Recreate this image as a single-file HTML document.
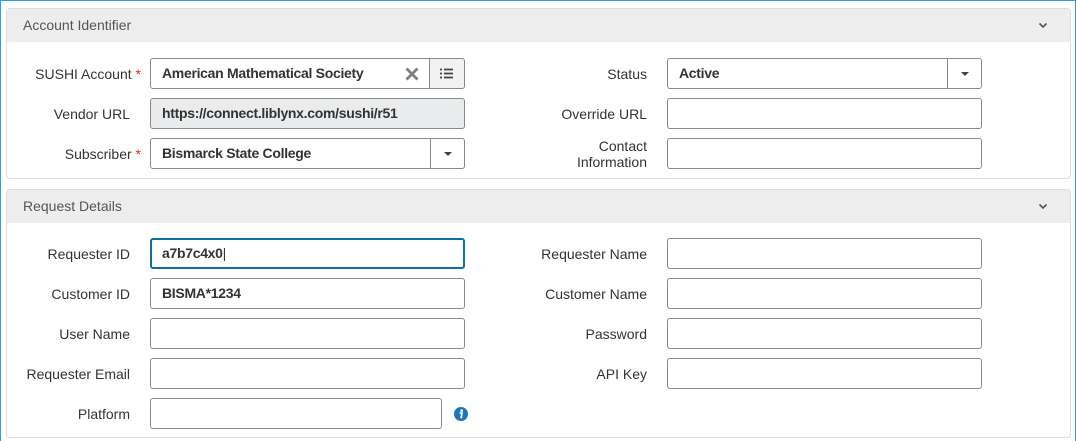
<!DOCTYPE html><html><head><style>
*{box-sizing:border-box}
body{margin:0;width:1076px;height:441px;background:#fff;font-family:"Liberation Sans",Arial,sans-serif;font-size:14px;color:#333;position:relative;overflow:hidden}
.frame{position:absolute;left:0;top:0;width:1076px;height:441px;border:1px solid #2d9cf0;border-bottom:none}
.panel{position:absolute;left:6px;width:1065px;border:1px solid #ddd;border-radius:4px;background:#fff}
.hdr{height:33px;background:#ededed;border-radius:4px 4px 0 0;padding-left:16px;line-height:33px;color:#555;font-size:14px;position:relative}
.chev{position:absolute;right:22px;top:13px}
.lbl{position:absolute;text-align:right;line-height:16px}
.inp{position:absolute;height:31px;border:1px solid #8a8a8a;border-radius:3px;background:#fff;padding-left:11px;line-height:29px;font-weight:bold;color:#333;letter-spacing:-0.3px}
.req{color:#e0262c}
.dd{position:absolute;top:0;right:0;width:34px;height:29px;border-left:1px solid #8a8a8a}
.dd:after{content:"";position:absolute;left:13px;top:13px;border-left:4px solid transparent;border-right:4px solid transparent;border-top:4px solid #444}
</style></head><body>
<div class="frame"></div>
<div class="panel" style="top:8px;height:171px">
<div class="hdr">Account Identifier<svg class="chev" width="10" height="7" viewBox="0 0 10 7"><path d="M1.5 1.5L5 5L8.5 1.5" stroke="#555" stroke-width="1.6" fill="none"/></svg></div>
</div>
<div class="panel" style="top:189px;height:249px">
<div class="hdr">Request Details<svg class="chev" width="10" height="7" viewBox="0 0 10 7"><path d="M1.5 1.5L5 5L8.5 1.5" stroke="#555" stroke-width="1.6" fill="none"/></svg></div>
</div>

<div class="lbl" style="left:20px;width:121px;top:66px">SUSHI Account <span class="req">*</span></div>
<div class="inp" style="left:150px;top:58px;width:315px">American Mathematical Society
<svg style="position:absolute;left:254px;top:8px" width="14" height="14" viewBox="0 0 14 14"><path d="M1.5 1.5L12.5 12.5M12.5 1.5L1.5 12.5" stroke="#808080" stroke-width="2.8"/></svg>
<div style="position:absolute;right:0;top:0;width:35px;height:29px;border-left:1px solid #8a8a8a;background:#f2f2f2;border-radius:0 3px 3px 0">
<svg style="position:absolute;left:10px;top:9px" width="14" height="11" viewBox="0 0 14 11"><path d="M0 1.5h2M4 1.5h9M0 5.5h2M4 5.5h9M0 9.5h2M4 9.5h9" stroke="#444" stroke-width="1.8"/></svg></div></div>
<div class="lbl" style="left:20px;width:110px;top:106px">Vendor URL</div>
<div class="inp" style="left:150px;top:98px;width:315px;background:#e9ebed">https://connect.liblynx.com/sushi/r51</div>
<div class="lbl" style="left:20px;width:121px;top:146px">Subscriber <span class="req">*</span></div>
<div class="inp" style="left:150px;top:138px;width:315px">Bismarck State College<div class="dd"></div></div>

<div class="lbl" style="left:500px;width:147px;top:66px">Status</div>
<div class="inp" style="left:667px;top:58px;width:315px">Active<div class="dd"></div></div>
<div class="lbl" style="left:500px;width:147px;top:106px">Override URL</div>
<div class="inp" style="left:667px;top:98px;width:315px"></div>
<div class="lbl" style="left:500px;width:147px;top:138px">Contact<br>Information</div>
<div class="inp" style="left:667px;top:138px;width:315px"></div>

<div class="lbl" style="left:20px;width:110px;top:246px">Requester ID</div>
<div class="inp" style="left:150px;top:238px;width:315px;border:2px solid #0f6e9c;line-height:27px;padding-left:10px">a7b7c4x0<span style="font-weight:normal">|</span></div>
<div class="lbl" style="left:20px;width:110px;top:286px">Customer ID</div>
<div class="inp" style="left:150px;top:278px;width:315px">BISMA*1234</div>
<div class="lbl" style="left:20px;width:110px;top:326px">User Name</div>
<div class="inp" style="left:150px;top:318px;width:315px"></div>
<div class="lbl" style="left:10px;width:120px;top:366px">Requester Email</div>
<div class="inp" style="left:150px;top:358px;width:315px"></div>
<div class="lbl" style="left:20px;width:110px;top:406px">Platform</div>
<div class="inp" style="left:150px;top:398px;width:292px"></div>
<svg style="position:absolute;left:454px;top:407px" width="14" height="14" viewBox="0 0 14 14"><circle cx="7" cy="7" r="7" fill="#1b75bb"/><circle cx="7.6" cy="3.6" r="1.3" fill="#fff"/><path d="M5.5 6h2.6l-1 4.5h1.2" stroke="#fff" stroke-width="1.6" fill="none"/></svg>

<div class="lbl" style="left:500px;width:147px;top:246px">Requester Name</div>
<div class="inp" style="left:667px;top:238px;width:315px"></div>
<div class="lbl" style="left:500px;width:147px;top:286px">Customer Name</div>
<div class="inp" style="left:667px;top:278px;width:315px"></div>
<div class="lbl" style="left:500px;width:147px;top:326px">Password</div>
<div class="inp" style="left:667px;top:318px;width:315px"></div>
<div class="lbl" style="left:500px;width:147px;top:366px">API Key</div>
<div class="inp" style="left:667px;top:358px;width:315px"></div>
</body></html>
